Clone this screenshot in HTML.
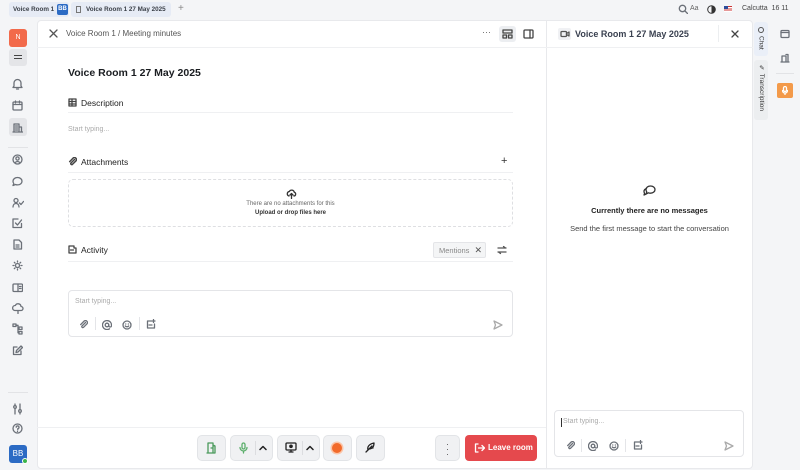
<!DOCTYPE html>
<html><head><meta charset="utf-8"><style>
*{box-sizing:border-box;margin:0;padding:0}
body{width:800px;height:470px;overflow:hidden;background:#f4f5f7;font-family:"Liberation Sans",sans-serif;color:#1f2329;position:relative}
.abs{position:absolute}
svg{display:block}
.ic{stroke:#6b7078;fill:none;stroke-width:1.3;stroke-linecap:round;stroke-linejoin:round}
.tab{position:absolute;top:2px;height:15px;background:#e6ebf5;border-radius:3px;font-size:6.3px;font-weight:bold;color:#3a3f47;line-height:15px;white-space:nowrap}
.side svg{position:absolute;left:12px}
.btn{position:absolute;top:435px;height:26px;background:#f0f1f3;border:1px solid #e2e4e7;border-radius:5px}
</style></head><body>
<!-- top bar -->
<div class="tab" style="left:9px;width:60px;padding-left:4px">Voice Room 1<span style="position:absolute;left:48px;top:2px;width:11px;height:11px;background:#2c6bc4;color:#fff;border-radius:2px;font-size:6px;line-height:11px;text-align:center">BB</span></div>
<div class="tab" style="left:71px;width:100px;padding-left:15px">Voice Room 1 27 May 2025<span style="position:absolute;left:5px;top:4px;width:5px;height:7px;border:1px solid #777"></span></div>
<div class="abs" style="left:178px;top:3px;font-size:10px;color:#888">+</div>
<svg class="abs ic" style="left:678px;top:4px" width="10" height="10"><circle cx="4.5" cy="4.5" r="3.2"/><path d="M7 7l2.5 2.5"/></svg>
<div class="abs" style="left:690px;top:5px;font-size:7px;color:#666">Aa</div>
<svg class="abs" style="left:707px;top:5px" width="9" height="9"><circle cx="4.5" cy="4.5" r="3.8" fill="none" stroke="#333"/><path d="M4.5 0.7a3.8 3.8 0 0 1 0 7.6z" fill="#333"/></svg>
<div class="abs" style="left:724px;top:6px;width:8px;height:6px;background:linear-gradient(#c33 0 15%,#fff 15% 30%,#c33 30% 45%,#fff 45% 60%,#c33 60% 75%,#fff 75%)"><div style="width:4px;height:3px;background:#2c4d9a"></div></div>
<div class="abs" style="left:742px;top:5px;font-size:7px;color:#444">Calcutta&nbsp; 16 11</div>

<!-- left sidebar -->
<div class="abs side" style="left:0;top:20px;width:36px;height:450px">
<div class="abs" style="left:9px;top:9px;width:18px;height:18px;background:#f26a4b;border-radius:3px;color:#fff;font-size:7px;line-height:18px;text-align:center">N</div>
<div class="abs" style="left:9px;top:29px;width:18px;height:17px;background:#e4e5e8;border-radius:3px"><div style="position:absolute;left:5px;top:6px;width:8px;height:4px;border-top:1.2px solid #444;border-bottom:1.2px solid #444"></div></div>
<svg class="ic" style="top:58px" width="11" height="12"><path d="M2 8V5a3.5 3.5 0 0 1 7 0v3l1 1.5H1z M4.5 11h2"/></svg>
<svg class="ic" style="top:80px" width="11" height="11"><rect x="1" y="2" width="9" height="8" rx="1"/><path d="M1 4.5h9M3.5 1v2M7.5 1v2"/></svg>
<div class="abs" style="left:9px;top:98px;width:18px;height:18px;background:#e4e5e8;border-radius:3px"></div>
<svg class="ic" style="top:102px" width="11" height="11"><path d="M2 10V2h5v8M7 5h2.5v5M1 10h9.5M3.5 4h2M3.5 6h2M3.5 8h2"/></svg>
<div class="abs" style="left:8px;top:127px;width:20px;border-top:1px solid #e2e3e6"></div>
<svg class="ic" style="top:134px" width="11" height="11"><circle cx="5.5" cy="5.5" r="4.5"/><circle cx="5.5" cy="4.5" r="1.6"/><path d="M3 8.7c1.5-1.5 3.5-1.5 5 0"/></svg>
<svg class="ic" style="top:156px" width="11" height="11"><path d="M5.5 1.5c2.5 0 4.5 1.6 4.5 3.7s-2 3.7-4.5 3.7c-.7 0-1.4-.1-2-.4L1 9.5l.8-2C1.2 6.8 1 6 1 5.2 1 3.1 3 1.5 5.5 1.5z"/></svg>
<svg class="ic" style="top:177px" width="12" height="11"><circle cx="4" cy="3.5" r="2"/><path d="M1 10c0-2.5 1.5-3.5 3-3.5s3 1 3 3.5M7.5 6l1.5 1.5 2.5-3"/></svg>
<svg class="ic" style="top:198px" width="11" height="11"><path d="M9.5 5.5v4h-8.5v-8.5h5M3.5 5l2 2 4-5"/></svg>
<svg class="ic" style="top:219px" width="11" height="11"><path d="M2 1h5l2.5 2.5v6.5h-7.5zM4 6h3M4 8h3"/></svg>
<svg class="ic" style="top:240px" width="11" height="11"><circle cx="5.5" cy="5.5" r="2"/><path d="M5.5 1v1M5.5 9v1M1 5.5h1M9 5.5h1M2.3 2.3l.7.7M8 8l.7.7M2.3 8.7L3 8M8 3l.7-.7"/></svg>
<svg class="ic" style="top:262px" width="11" height="11"><rect x="1" y="2" width="9.5" height="7.5" rx="1"/><path d="M6 2v7.5M7.5 4.5h1.5M7.5 6.5h1.5"/></svg>
<svg class="ic" style="top:283px" width="12" height="11"><path d="M3 7.5a2.5 2.5 0 0 1 .3-5 3 3 0 0 1 5.7 1 2 2 0 0 1 0 4zM6 7.5v3"/></svg>
<svg class="ic" style="top:303px" width="11" height="12"><rect x="1" y="1" width="3" height="2.5"/><rect x="7" y="4" width="3" height="2.5"/><rect x="7" y="8.5" width="3" height="2.5"/><path d="M4 2.3h2v7.5h1M6 5.3h1"/></svg>
<svg class="ic" style="top:325px" width="11" height="11"><path d="M9 6v3.5H1.5V2H5M4 7.5l.5-2L9 1l1.5 1.5L6 7z"/></svg>
<div class="abs" style="left:8px;top:372px;width:20px;border-top:1px solid #e2e3e6"></div>
<svg class="ic" style="top:383px" width="11" height="12"><path d="M3 1v10M8 1v10"/><circle cx="3" cy="4" r="1.3" fill="#fff"/><circle cx="8" cy="8" r="1.3" fill="#fff"/></svg>
<svg class="ic" style="top:403px" width="11" height="11"><circle cx="5.5" cy="5.5" r="4.5"/><path d="M4.2 4.2a1.4 1.4 0 1 1 1.6 1.5v1M5.5 8.3v.2"/></svg>
<div class="abs" style="left:9px;top:425px;width:18px;height:18px;background:#2c6bc4;border-radius:3px;color:#fff;font-size:8px;line-height:18px;text-align:center">BB</div>
<div class="abs" style="left:22px;top:438px;width:6px;height:6px;background:#3bb54a;border-radius:50%;border:1px solid #fff"></div>
</div>

<!-- main card -->
<div class="abs" style="left:37px;top:20px;width:716px;height:449px;background:#fff;border-radius:4px;border:1px solid #e8e9ec"></div>
<div class="abs" style="left:546px;top:20px;width:1px;height:449px;background:#e8e9ec"></div>
<div class="abs" style="left:37px;top:47px;width:716px;height:1px;background:#eff0f2"></div>
<svg class="ic abs" style="left:49px;top:29px;stroke:#555" width="9" height="9"><path d="M1 1l7 7M8 1L1 8"/></svg>
<div class="abs" style="left:66px;top:29px;font-size:8px;color:#555">Voice Room 1 / Meeting minutes</div>
<div class="abs" style="left:482px;top:27px;font-size:9px;color:#666">···</div>
<div class="abs" style="left:499px;top:26px;width:17px;height:16px;background:#eceef1;border-radius:3px"></div>
<svg class="ic abs" style="left:502px;top:29px;stroke:#444" width="11" height="10"><rect x="1" y="1" width="9" height="3"/><rect x="1" y="6" width="3.5" height="3"/><rect x="6.5" y="6" width="3.5" height="3"/></svg>
<svg class="ic abs" style="left:523px;top:29px;stroke:#444" width="11" height="10"><rect x="1" y="1" width="9" height="8" rx="1"/><path d="M7 1v8"/></svg>

<div class="abs" style="left:68px;top:67px;font-size:10.5px;font-weight:bold;color:#1a1d21">Voice Room 1 27 May 2025</div>
<svg class="ic abs" style="left:68px;top:98px;stroke:#444" width="9" height="9"><rect x="1" y="1" width="7" height="7"/><path d="M1 3.5h7M1 6h7M4 1v7"/></svg>
<div class="abs" style="left:81px;top:98px;font-size:8.5px;color:#222">Description</div>
<div class="abs" style="left:68px;top:112px;width:445px;height:1px;background:#eff0f2"></div>
<div class="abs" style="left:68px;top:126px;font-size:7px;color:#aaa">Start typing...</div>
<svg class="ic abs" style="left:68px;top:157px;stroke:#444;stroke-width:1.5" width="9" height="9"><path d="M6.5 2.5L3 6a1 1 0 0 0 1.4 1.4L8 3.8a2 2 0 0 0-2.8-2.8L1.7 4.6"/></svg>
<div class="abs" style="left:81px;top:157px;font-size:8.5px;color:#222">Attachments</div>
<div class="abs" style="left:501px;top:155px;font-size:11px;color:#333">+</div>
<div class="abs" style="left:68px;top:172px;width:445px;height:1px;background:#eff0f2"></div>
<div class="abs" style="left:68px;top:179px;width:445px;height:48px;border:1px dashed #dedfe2;border-radius:5px"></div>
<svg class="ic abs" style="left:286px;top:189px;stroke:#333" width="11" height="10"><path d="M3 7a2.3 2.3 0 0 1 .3-4.5 2.7 2.7 0 0 1 5 .8 1.9 1.9 0 0 1-.3 3.7M5.5 9.5v-5M4 6l1.5-1.5L7 6"/></svg>
<div class="abs" style="left:68px;top:201px;width:445px;text-align:center;font-size:6px;color:#666">There are no attachments for this</div>
<div class="abs" style="left:68px;top:210px;width:445px;text-align:center;font-size:6px;color:#333;font-weight:bold">Upload or drop files here</div>
<svg class="ic abs" style="left:68px;top:245px;stroke:#444" width="9" height="9"><path d="M6 1H1v7h7V3M6 1v2h2M2.5 5h3"/></svg>
<div class="abs" style="left:81px;top:245px;font-size:8.5px;color:#222">Activity</div>
<div class="abs" style="left:433px;top:242px;width:53px;height:16px;background:#f4f5f6;border:1px solid #e4e5e8;border-radius:2px;font-size:7.5px;color:#888;line-height:14px;padding-left:5px">Mentions <span style="color:#555;font-size:9px;margin-left:3px">✕</span></div>
<svg class="ic abs" style="left:497px;top:245px;stroke:#555" width="10" height="10"><path d="M1 3h8M6.5 1.5L8.5 3M9 7H1M3.5 8.5L1.5 7"/></svg>
<div class="abs" style="left:68px;top:261px;width:445px;height:1px;background:#eff0f2"></div>
<div class="abs" style="left:68px;top:290px;width:445px;height:47px;border:1px solid #e4e5e8;border-radius:4px"></div>
<div class="abs" style="left:75px;top:298px;font-size:7px;color:#aaa">Start typing...</div>
<svg class="ic abs" style="left:79px;top:320px" width="9" height="9"><path d="M6.5 2.5L3 6a1 1 0 0 0 1.4 1.4L8 3.8a2 2 0 0 0-2.8-2.8L1.7 4.6"/></svg>
<div class="abs" style="left:95px;top:317px;width:1px;height:13px;background:#e4e5e8"></div>
<svg class="ic abs" style="left:102px;top:320px" width="10" height="10"><circle cx="5" cy="5" r="1.8"/><path d="M6.8 5v1a1.4 1.4 0 0 0 2.7 0V5a4.5 4.5 0 1 0-2 3.8"/></svg>
<svg class="ic abs" style="left:122px;top:320px" width="10" height="10"><circle cx="5" cy="5" r="4"/><path d="M3.3 6c1 1 2.4 1 3.4 0M3.7 4h.1M6.3 4h.1"/></svg>
<div class="abs" style="left:139px;top:317px;width:1px;height:13px;background:#e4e5e8"></div>
<svg class="ic abs" style="left:146px;top:319px" width="10" height="10"><path d="M6 2H1.5v7h7V5M3 6h3M7.5 0.5v3M6 2h3"/></svg>
<svg class="ic abs" style="left:493px;top:320px;stroke:#aaa" width="10" height="10"><path d="M1 1l8 4-8 4 1.5-4z"/></svg>

<!-- bottom toolbar -->
<div class="abs" style="left:37px;top:427px;width:509px;height:1px;background:#eff0f2"></div>
<div class="btn" style="left:197px;width:29px"></div>
<svg class="ic abs" style="left:206px;top:442px;stroke:#4a9a5c" width="11" height="12"><path d="M2 1h5v10H2zM7 3l2 1v7M5 6l2 0M9 11H1"/></svg>
<div class="btn" style="left:230px;width:43px"></div>
<svg class="ic abs" style="left:239px;top:442px;stroke:#5aae6a" width="9" height="12"><rect x="3" y="1" width="3" height="6" rx="1.5"/><path d="M1 5.5a3.5 3.5 0 0 0 7 0M4.5 9v2"/></svg>
<div class="abs" style="left:255px;top:441px;width:1px;height:14px;background:#dcdde0"></div>
<svg class="ic abs" style="left:259px;top:445px;stroke:#222;stroke-width:1.5" width="8" height="6"><path d="M1 4.5l3-3 3 3"/></svg>
<div class="btn" style="left:277px;width:43px"></div>
<svg class="ic abs" style="left:285px;top:442px;stroke:#222" width="12" height="11"><rect x="1" y="1" width="10" height="7" rx="1"/><path d="M4 10h4M6 8v2"/><circle cx="6" cy="4.3" r="1.2" fill="#222"/></svg>
<div class="abs" style="left:302px;top:441px;width:1px;height:14px;background:#dcdde0"></div>
<svg class="ic abs" style="left:306px;top:445px;stroke:#222;stroke-width:1.5" width="8" height="6"><path d="M1 4.5l3-3 3 3"/></svg>
<div class="btn" style="left:323px;width:29px"></div>
<div class="abs" style="left:332px;top:443px;width:10px;height:10px;border-radius:50%;background:#f26a2a;box-shadow:0 0 0 1.5px #fbc5a8"></div>
<div class="btn" style="left:356px;width:29px"></div>
<svg class="ic abs" style="left:365px;top:442px;stroke:#222" width="11" height="11"><path d="M1 10l6-6M3 8c-1-3 1-6 6-7 0 4-2 6-5 6M5 6h3"/></svg>
<div class="btn" style="left:435px;width:25px"></div>
<div class="abs" style="left:446px;top:442px;font-size:9px;color:#555;line-height:5px">·<br>·<br>·</div>
<div class="abs" style="left:465px;top:435px;width:72px;height:26px;background:#e5494d;border-radius:4px;color:#fff;font-size:8px;font-weight:bold;line-height:26px;padding-left:23px">Leave room</div>
<svg class="ic abs" style="left:474px;top:443px;stroke:#fff" width="11" height="10"><path d="M4 1H1.5v8H4M4.5 5h6M8 2.5L10.5 5 8 7.5"/></svg>

<!-- chat panel -->
<div class="abs" style="left:558px;top:28px;width:13px;height:12px;background:#f0f1f4;border-radius:2px"></div>
<svg class="ic abs" style="left:560px;top:30px;stroke:#555" width="10" height="8"><rect x="1" y="1.5" width="5.5" height="5" rx="1"/><path d="M6.5 3.5l2.5-1.5v4L6.5 4.5"/></svg>
<div class="abs" style="left:575px;top:29px;font-size:9px;font-weight:bold;color:#3a4150">Voice Room 1 27 May 2025</div>
<div class="abs" style="left:718px;top:25px;width:1px;height:17px;background:#eceef0"></div>
<svg class="ic abs" style="left:731px;top:30px;stroke:#444" width="8" height="8"><path d="M1 1l6 6M7 1L1 7"/></svg>
<svg class="ic abs" style="left:643px;top:184px;stroke:#333" width="13" height="13"><path d="M7.5 2c2.5 0 4.5 1.6 4.5 3.6s-2 3.6-4.5 3.6c-.7 0-1.4-.1-2-.4L3 10l.8-2C3.2 7.3 3 6.5 3 5.6 3 3.6 5 2 7.5 2z M3.5 4.5C2 5 1 6 1 7.5c0 .7.2 1.3.6 1.8L1 11l2-.8"/></svg>
<div class="abs" style="left:547px;top:206px;width:205px;text-align:center;font-size:7.5px;font-weight:bold;color:#222">Currently there are no messages</div>
<div class="abs" style="left:547px;top:224px;width:205px;text-align:center;font-size:7.5px;color:#444">Send the first message to start the conversation</div>
<div class="abs" style="left:554px;top:410px;width:190px;height:47px;border:1px solid #e4e5e8;border-radius:4px"></div>
<div class="abs" style="left:561px;top:418px;width:1px;height:9px;background:#333"></div>
<div class="abs" style="left:563px;top:418px;font-size:7px;color:#aaa">Start typing...</div>
<svg class="ic abs" style="left:566px;top:441px" width="9" height="9"><path d="M6.5 2.5L3 6a1 1 0 0 0 1.4 1.4L8 3.8a2 2 0 0 0-2.8-2.8L1.7 4.6"/></svg>
<div class="abs" style="left:581px;top:439px;width:1px;height:13px;background:#e4e5e8"></div>
<svg class="ic abs" style="left:588px;top:441px" width="10" height="10"><circle cx="5" cy="5" r="1.8"/><path d="M6.8 5v1a1.4 1.4 0 0 0 2.7 0V5a4.5 4.5 0 1 0-2 3.8"/></svg>
<svg class="ic abs" style="left:609px;top:441px" width="10" height="10"><circle cx="5" cy="5" r="4"/><path d="M3.3 6c1 1 2.4 1 3.4 0M3.7 4h.1M6.3 4h.1"/></svg>
<div class="abs" style="left:625px;top:439px;width:1px;height:13px;background:#e4e5e8"></div>
<svg class="ic abs" style="left:633px;top:440px" width="10" height="10"><path d="M6 2H1.5v7h7V5M3 6h3M7.5 0.5v3M6 2h3"/></svg>
<svg class="ic abs" style="left:724px;top:441px;stroke:#aaa" width="10" height="10"><path d="M1 1l8 4-8 4 1.5-4z"/></svg>

<!-- vertical tabs -->
<div class="abs" style="left:754px;top:22px;width:14px;height:34px;background:#eaeff8;border-radius:3px"></div>
<div class="abs" style="left:758px;top:27px;width:6px;height:6px;border:1px solid #555;border-radius:50%"></div>
<div class="abs" style="left:761px;top:36px;writing-mode:vertical-rl;font-size:6.5px;color:#333;transform:translateX(-50%)">Chat</div>
<div class="abs" style="left:754px;top:60px;width:14px;height:60px;background:#eceef0;border-radius:3px"></div>
<div class="abs" style="left:761px;top:64px;writing-mode:vertical-rl;font-size:6.5px;color:#333;transform:translateX(-50%)">✎ Transcription</div>
<!-- right sidebar -->
<svg class="ic abs" style="left:780px;top:29px" width="10" height="10"><rect x="1" y="1.5" width="8" height="7" rx="1"/><path d="M1 3.5h8"/></svg>
<svg class="ic abs" style="left:780px;top:53px" width="10" height="10"><path d="M2 9V3h4v6M6 1.5h2V9M1 9h8"/></svg>
<div class="abs" style="left:776px;top:73px;width:18px;border-top:1px solid #e2e3e6"></div>
<div class="abs" style="left:777px;top:83px;width:16px;height:15px;background:#f39a4a;border-radius:2px"></div>
<svg class="ic abs" style="left:782px;top:86px;stroke:#fff" width="6" height="9"><rect x="1.5" y="0.5" width="3" height="5" rx="1.5"/><path d="M0.5 4.5a2.5 2.5 0 0 0 5 0M3 7v1.5"/></svg>
</body></html>
